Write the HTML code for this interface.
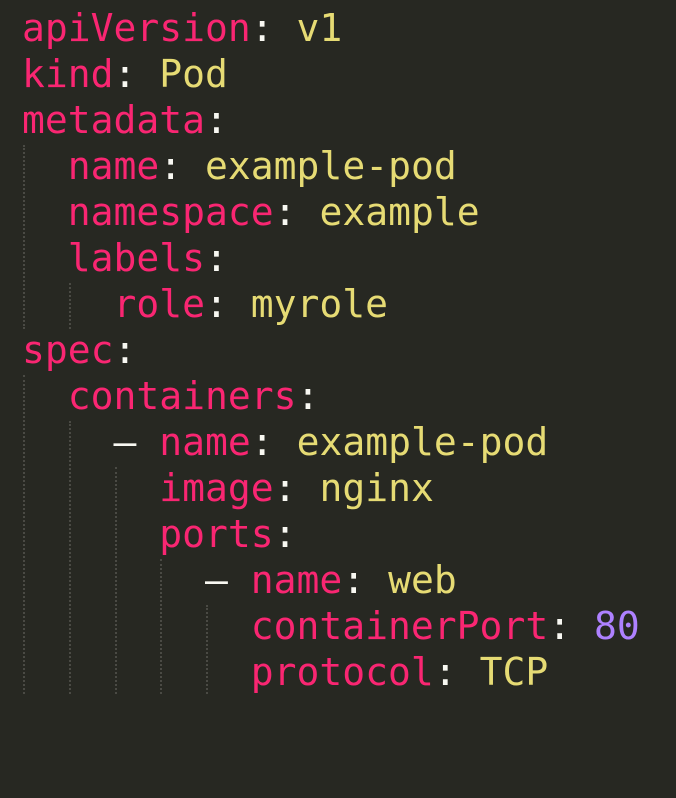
<!DOCTYPE html><html><head><style>
body{margin:0;background:#272822;width:676px;height:798px;overflow:hidden;position:relative}
pre{position:absolute;left:22px;top:5px;margin:0;font-family:"DejaVu Sans Mono","Liberation Mono",monospace;font-size:38px;line-height:46px;color:#f8f8f2}
.k{color:#f92672}.s{color:#e6db74}.n{color:#ae81ff}
.g{position:absolute;width:0;border-left:2px dotted #4a4a44}
</style></head><body>
<div class="g" style="left:23px;top:145px;height:184px"></div>
<div class="g" style="left:69px;top:283px;height:46px"></div>
<div class="g" style="left:23px;top:375px;height:319px"></div>
<div class="g" style="left:69px;top:421px;height:273px"></div>
<div class="g" style="left:115px;top:467px;height:227px"></div>
<div class="g" style="left:160px;top:559px;height:135px"></div>
<div class="g" style="left:206px;top:605px;height:89px"></div>
<pre><span class="k">apiVersion</span>: <span class="s">v1</span>
<span class="k">kind</span>: <span class="s">Pod</span>
<span class="k">metadata</span>:
  <span class="k">name</span>: <span class="s">example-pod</span>
  <span class="k">namespace</span>: <span class="s">example</span>
  <span class="k">labels</span>:
    <span class="k">role</span>: <span class="s">myrole</span>
<span class="k">spec</span>:
  <span class="k">containers</span>:
    – <span class="k">name</span>: <span class="s">example-pod</span>
      <span class="k">image</span>: <span class="s">nginx</span>
      <span class="k">ports</span>:
        – <span class="k">name</span>: <span class="s">web</span>
          <span class="k">containerPort</span>: <span class="n">80</span>
          <span class="k">protocol</span>: <span class="s">TCP</span></pre>
</body></html>
